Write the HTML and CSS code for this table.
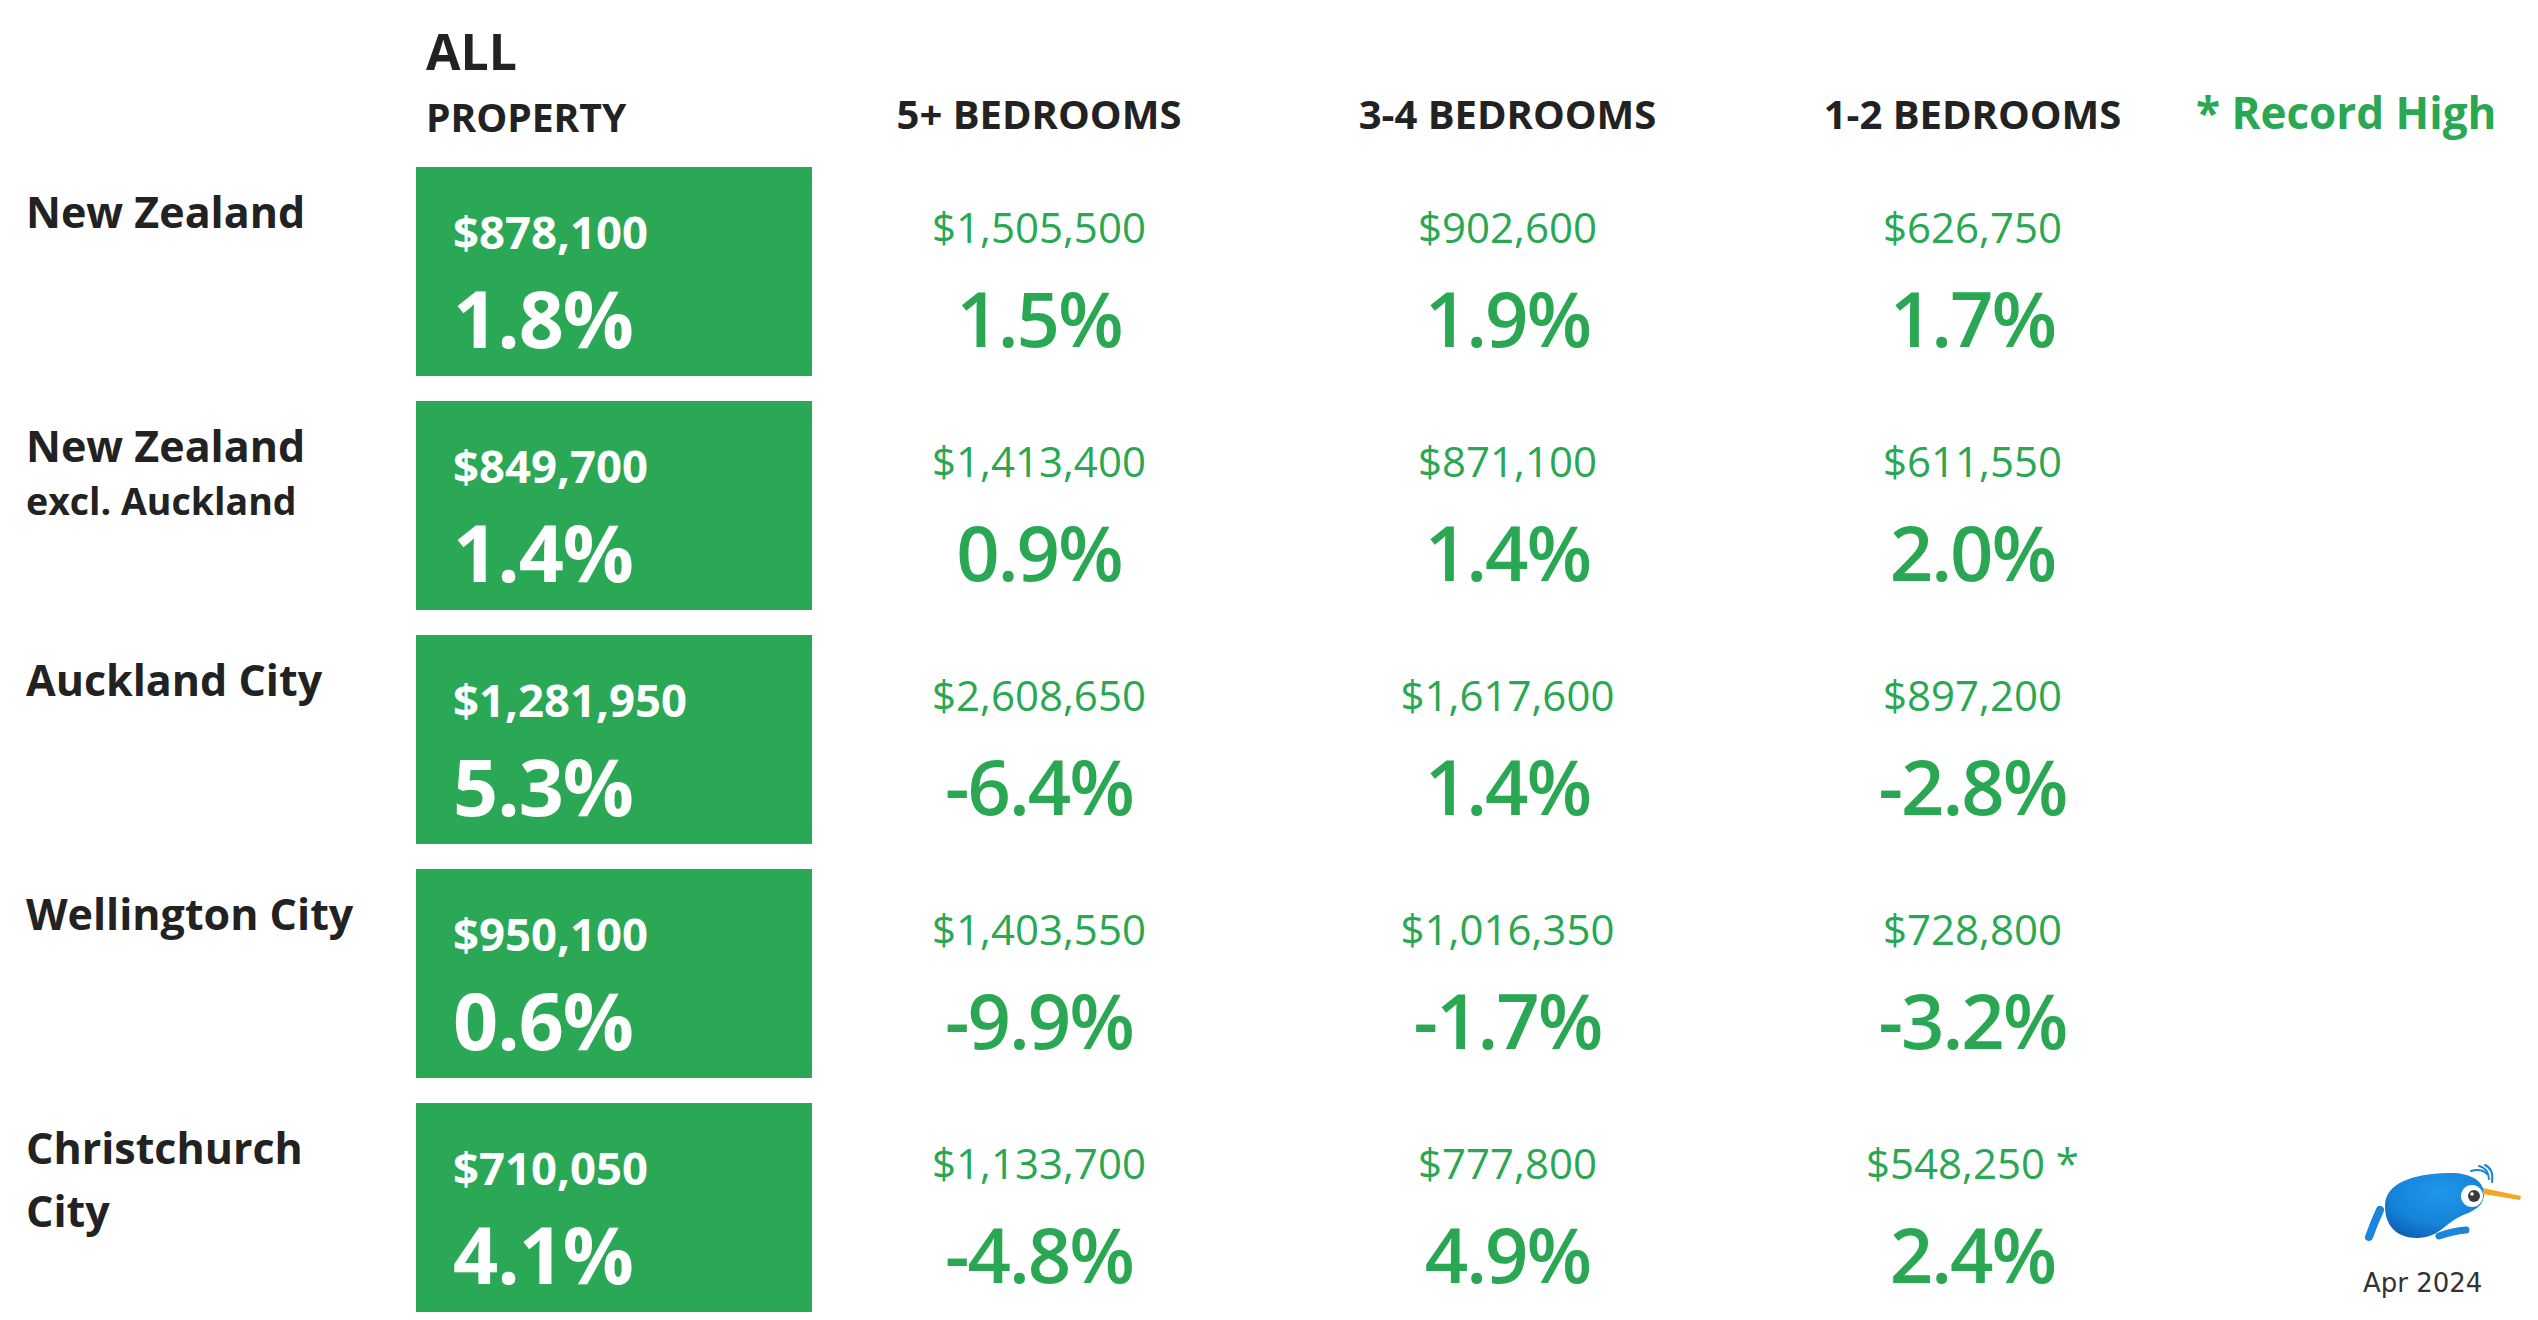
FILE: index.html
```html
<!DOCTYPE html>
<html lang="en">
<head>
<meta charset="utf-8">
<title>Property values by bedrooms</title>
<link rel="stylesheet" href="styles.css">
</head>
<body>
<div class="board">
  <div class="hd hd-all"><div class="all">ALL</div><div class="prop">PROPERTY</div></div>
  <div class="hd hd-empty"></div>
  <div class="hd hd-bed">5+ BEDROOMS</div>
  <div class="hd hd-bed">3-4 BEDROOMS</div>
  <div class="hd hd-bed">1-2 BEDROOMS</div>
  <div class="hd hd-rec">* Record High</div>

  <div class="label"><div>New Zealand</div></div>
  <div class="box"><div class="bprice">$878,100</div><div class="bpct">1.8%</div></div>
  <div class="val"><div class="price">$1,505,500</div><div class="pct">1.5%</div></div>
  <div class="val"><div class="price">$902,600</div><div class="pct">1.9%</div></div>
  <div class="val"><div class="price">$626,750</div><div class="pct">1.7%</div></div>
  <div class="spare"></div>

  <div class="label"><div>New Zealand</div><div class="sub">excl. Auckland</div></div>
  <div class="box"><div class="bprice">$849,700</div><div class="bpct">1.4%</div></div>
  <div class="val"><div class="price">$1,413,400</div><div class="pct">0.9%</div></div>
  <div class="val"><div class="price">$871,100</div><div class="pct">1.4%</div></div>
  <div class="val"><div class="price">$611,550</div><div class="pct">2.0%</div></div>
  <div class="spare"></div>

  <div class="label"><div>Auckland City</div></div>
  <div class="box"><div class="bprice">$1,281,950</div><div class="bpct">5.3%</div></div>
  <div class="val"><div class="price">$2,608,650</div><div class="pct">-6.4%</div></div>
  <div class="val"><div class="price">$1,617,600</div><div class="pct">1.4%</div></div>
  <div class="val"><div class="price">$897,200</div><div class="pct">-2.8%</div></div>
  <div class="spare"></div>

  <div class="label"><div>Wellington City</div></div>
  <div class="box"><div class="bprice">$950,100</div><div class="bpct">0.6%</div></div>
  <div class="val"><div class="price">$1,403,550</div><div class="pct">-9.9%</div></div>
  <div class="val"><div class="price">$1,016,350</div><div class="pct">-1.7%</div></div>
  <div class="val"><div class="price">$728,800</div><div class="pct">-3.2%</div></div>
  <div class="spare"></div>

  <div class="label"><div>Christchurch</div><div>City</div></div>
  <div class="box"><div class="bprice">$710,050</div><div class="bpct">4.1%</div></div>
  <div class="val"><div class="price">$1,133,700</div><div class="pct">-4.8%</div></div>
  <div class="val"><div class="price">$777,800</div><div class="pct">4.9%</div></div>
  <div class="val"><div class="price">$548,250 *</div><div class="pct">2.4%</div></div>
  <div class="spare brand">
    <svg class="kiwi" width="170" height="82" viewBox="0 0 170 82" aria-hidden="true">
      <defs>
        <radialGradient id="kb" cx="0.55" cy="0.3" r="0.8">
          <stop offset="0" stop-color="#2196ea"/>
          <stop offset="0.6" stop-color="#1584d9"/>
          <stop offset="1" stop-color="#0b5cad"/>
        </radialGradient>
      </defs>
      <path d="M25 49 Q19 62 14 76" fill="none" stroke="#1a86db" stroke-width="8" stroke-linecap="round"/>
      <path d="M84 75 Q98 70 111 69" fill="none" stroke="#1a86db" stroke-width="7" stroke-linecap="round"/>
      <path d="M30 45 C30 22 58 13 92 12 C114 11 129 19 129 33 C129 45 119 50 106 55 C90 62 84 77 62 77 C42 77 30 65 30 45 Z" fill="url(#kb)"/>
      <path d="M116 10 Q126 7 132 13" fill="none" stroke="#1a86db" stroke-width="2" stroke-linecap="round"/>
      <path d="M124 5 Q133 7 134 18" fill="none" stroke="#1a86db" stroke-width="2" stroke-linecap="round"/>
      <path d="M130 4 Q139 8 137 21" fill="none" stroke="#1a86db" stroke-width="2" stroke-linecap="round"/>
      <path d="M128 27 L166 35 L165 39 L128 33 Z" fill="#f5a623"/>
      <circle cx="117" cy="35" r="11" fill="#ffffff"/>
      <circle cx="119" cy="35" r="6" fill="#3a3a3a"/>
      <circle cx="117" cy="33" r="1.8" fill="#ffffff"/>
    </svg>
    <div class="date">Apr 2024</div>
  </div>
</div>
</body>
</html>
```
FILE: styles.css
```css
html, body {
  margin: 0;
  padding: 0;
  background: #ffffff;
}
body {
  font-family: "Open Sans", "Noto Sans", "DejaVu Sans", sans-serif;
  color: #222222;
}
.board {
  display: grid;
  grid-template-columns: 390px 396px 454px 483px 447px 342px;
  row-gap: 25px;
  padding-left: 26px;
  width: 2538px;
  box-sizing: border-box;
}
.hd {
  font-weight: 700;
  margin-bottom: 6px;
}
.hd-all {
  grid-column: 2;
  padding-top: 25px;
  padding-left: 10px;
}
.hd-empty {
  grid-column: 1;
  grid-row: 1;
}
.all {
  font-size: 50px;
  line-height: 52px;
}
.prop {
  font-size: 39px;
  line-height: 38px;
  margin-top: 21px;
}
.hd-bed {
  align-self: end;
  text-align: center;
  font-size: 40px;
  line-height: 38px;
  margin-bottom: 9px;
}
.hd-rec {
  align-self: end;
  font-size: 44px;
  line-height: 42px;
  color: #2aa752;
  margin-bottom: 9px;
  white-space: nowrap;
}
.label {
  padding-top: 13px;
  font-weight: 700;
  font-size: 43px;
  line-height: 63px;
}
.label .sub {
  font-size: 37.5px;
  line-height: 47px;
}
.box {
  background: #2ba856;
  height: 209px;
  box-sizing: border-box;
  padding: 42px 0 0 37px;
  color: #ffffff;
  font-weight: 700;
}
.bprice {
  font-size: 45.5px;
  line-height: 44px;
}
.bpct {
  font-size: 79px;
  line-height: 78px;
  margin-top: 26px;
  letter-spacing: -1px;
}
.val {
  text-align: center;
  color: #2aa752;
  padding-top: 39px;
}
.price {
  font-size: 42px;
  line-height: 42px;
  font-weight: 400;
}
.pct {
  font-size: 76px;
  line-height: 78px;
  margin-top: 31px;
  font-weight: 600;
  letter-spacing: -2px;
}
.brand {
  display: flex;
  flex-direction: column;
  align-items: flex-start;
  padding-left: 159px;
  padding-top: 58px;
}
.kiwi {
  display: block;
}
.date {
  font-family: "DejaVu Sans", sans-serif;
  font-size: 26px;
  line-height: 26px;
  color: #333333;
  margin-top: 27px;
  margin-left: 8px;
}
```
